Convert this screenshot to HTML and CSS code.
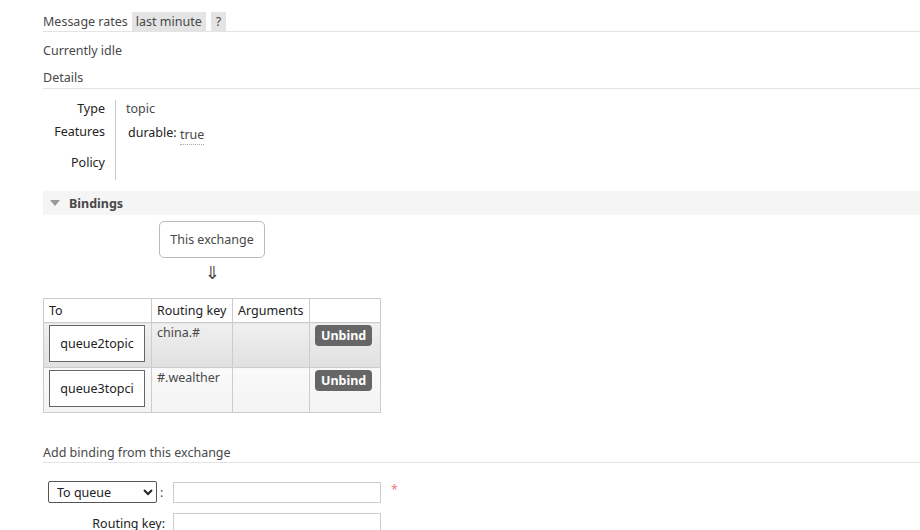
FILE: index.html
```html
<!DOCTYPE html>
<html>
<head>
<meta charset="utf-8">
<link rel="stylesheet" href="styles.css">
</head>
<body>
<div class="page">
  <div class="rates">
    <span class="rates-label">Message rates</span>
    <span class="pill">last minute</span>
    <span class="pill q">?</span>
  </div>
  <div class="idle">Currently idle</div>
  <div class="sec-title">Details</div>
  <div class="details">
    <div class="dlabels">
      <div class="dl r1">Type</div>
      <div class="dl r2">Features</div>
      <div class="dl r3">Policy</div>
    </div>
    <div class="dvalues">
      <div class="dv r1">topic</div>
      <div class="dv r2"><span class="key">durable:</span> <span class="true">true</span></div>
      <div class="dv r3"></div>
    </div>
  </div>
  <div class="bind-head"><span class="tri"></span><span>Bindings</span></div>
  <div class="flow">
    <div class="this-ex">This exchange</div>
    <div class="arrow">⇓</div>
  </div>
  <table class="btable">
    <thead>
      <tr><th class="c1">To</th><th class="c2">Routing key</th><th class="c3">Arguments</th><th class="c4"></th></tr>
    </thead>
    <tbody>
      <tr class="alt1">
        <td><div class="qbox">queue2topic</div></td>
        <td class="rk">china.#</td>
        <td></td>
        <td><span class="unbind">Unbind</span></td>
      </tr>
      <tr class="alt2">
        <td><div class="qbox">queue3topci</div></td>
        <td class="rk">#.wealther</td>
        <td></td>
        <td><span class="unbind">Unbind</span></td>
      </tr>
    </tbody>
  </table>
  <div class="sec-title add">Add binding from this exchange</div>
  <div class="form">
    <div class="frow">
      <div class="flabel"><select class="sel"><option>To queue</option></select><span class="colon">:</span></div>
      <input class="inp" type="text">
      <span class="req">*</span>
    </div>
    <div class="frow">
      <div class="flabel"><span class="lab">Routing key:</span></div>
      <input class="inp" type="text">
    </div>
  </div>
</div>
</body>
</html>
```
FILE: styles.css
```css
html, body { margin: 0; padding: 0; background: #fff; }
body { font-family: "Noto Sans", "Open Sans", sans-serif; font-size: 12.5px; color: #484848; }
.page { padding-left: 43px; padding-top: 12px; }
.rates { height: 19px; line-height: 19px; border-bottom: 1px solid #e4e4e4; display: flex; align-items: center; }
.rates-label { margin-right: 4px; }
.pill { background: #e4e4e4; padding: 0 4px; margin-right: 5px; height: 19px; }
.pill.q { padding: 0 5px; }
.idle { margin-top: 11px; line-height: 16px; }
.sec-title { margin-top: 11px; line-height: 16px; padding-bottom: 2px; border-bottom: 1px solid #e4e4e4; }
.details { display: flex; margin-top: 11px; }
.dlabels { width: 62px; text-align: right; padding-right: 10px; color: #222; padding-top: 1px; }
.dvalues { border-left: 1px solid #ccc; padding-left: 10px; height: 79px; padding-top: 1px; }
.dl, .dv { line-height: 16px; }
.r1 { height: 23px; }
.r2 { height: 31px; }
.r3 { height: 16px; }
.key { color: #222; margin-left: 2px; }
.true { border-bottom: 1px dotted #aaa; display: inline-block; line-height: 18px; position: relative; top: 2px; }
.bind-head { margin-top: 11px; height: 24px; background: #f5f5f5; display: flex; align-items: center; font-weight: bold; color: #484848; font-size: 12.5px; }
.tri { width: 0; height: 0; border-left: 5px solid transparent; border-right: 5px solid transparent; border-top: 6px solid #999; margin: 0 9px 0 7px; }
.flow { width: 338px; display: flex; flex-direction: column; align-items: center; margin-top: 6px; }
.this-ex { border: 1px solid #bbb; border-radius: 5px; padding: 0 10px; height: 35px; line-height: 35px; }
.arrow { font-family: "DejaVu Sans", sans-serif; font-size: 18px; color: #444; line-height: 20px; margin-top: 5px; height: 21px; }
.btable { border-collapse: collapse; margin-top: 14px; font-size: 12.5px; }
.btable th, .btable td { border: 1px solid #ccc; text-align: left; vertical-align: top; }
.btable th { font-weight: normal; color: #222; height: 23px; padding: 0 5px; line-height: 23px; }
.c1 { width: 97px; }
.c2 { width: 70px; }
.c3 { width: 66px; }
.c4 { width: 60px; }
.btable td { height: 40px; padding: 2px 5px; }
.alt1 td { background: linear-gradient(#f0f0f0, #e0e0e0); }
.alt2 td { background: linear-gradient(#fafafa, #f3f3f3); }
.qbox { border: 1px solid #666; background: #fff; color: #222; width: 94px; height: 35px; line-height: 35px; text-align: center; }
.rk { line-height: 16px; }
.unbind { display: inline-block; background: #666; color: #fff; font-weight: bold; border-radius: 4px; padding: 0 6px; height: 21px; line-height: 21px; }
.add { margin-top: 32px; padding-bottom: 1px; }
.form { margin-top: 18px; }
.frow { display: flex; align-items: center; height: 22px; margin-bottom: 9px; }
.flabel { width: 122px; display: flex; justify-content: flex-end; align-items: center; padding-right: 8px; }
.sel { width: 109px; height: 22px; font-family: inherit; font-size: 12.5px; color: #222; border: 1px solid #555; border-radius: 2px; background: #fff; margin-right: 3px; padding-left: 4px; }
.colon { width: 5px; }
.lab { color: #222; }
.inp { width: 202px; height: 17px; border: 1px solid #ccc; padding: 1px 2px; margin: 0; }
.req { color: #f08080; margin-left: 10px; position: relative; top: -3px; }
```
